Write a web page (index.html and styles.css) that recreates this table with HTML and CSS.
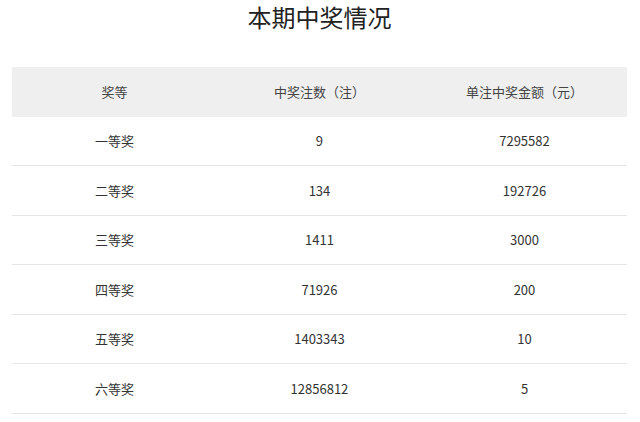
FILE: index.html
```html
<!DOCTYPE html>
<html lang="zh-CN">
<head>
<meta charset="utf-8">
<link rel="stylesheet" href="styles.css">
</head>
<body>
<div class="page">
  <h1 class="title">本期中奖情况</h1>
  <table class="prize">
    <thead>
      <tr><th>奖等</th><th>中奖注数（注）</th><th>单注中奖金额（元）</th></tr>
    </thead>
    <tbody>
      <tr><td>一等奖</td><td>9</td><td>7295582</td></tr>
      <tr><td>二等奖</td><td>134</td><td>192726</td></tr>
      <tr><td>三等奖</td><td>1411</td><td>3000</td></tr>
      <tr><td>四等奖</td><td>71926</td><td>200</td></tr>
      <tr><td>五等奖</td><td>1403343</td><td>10</td></tr>
      <tr><td>六等奖</td><td>12856812</td><td>5</td></tr>
    </tbody>
  </table>
</div>
</body>
</html>
```
FILE: styles.css
```css
html, body {
  margin: 0;
  padding: 0;
  background: #ffffff;
}
.page {
  padding: 0 13px 0 12px;
  font-family: "Noto Sans CJK SC", "Noto Sans", sans-serif;
  color: #333333;
}
.title {
  margin: 0;
  height: 33px;
  line-height: 33px;
  font-size: 24px;
  font-weight: normal;
  text-align: center;
  color: #222222;
}
.prize {
  margin-top: 33.5px;
  width: 615px;
  border-collapse: collapse;
  table-layout: fixed;
  font-size: 13px;
}
.prize th,
.prize td {
  width: 33.333%;
  padding: 0;
  text-align: center;
  vertical-align: middle;
  font-weight: normal;
}
.prize th {
  height: 50px;
  background: #efefef;
  color: #444444;
}
.prize td {
  height: 48.5px;
  border-bottom: 1px solid #e6e6e6;
  color: #333333;
}
```
